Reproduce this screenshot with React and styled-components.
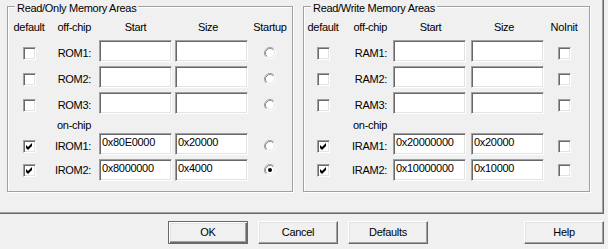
import React from "react";
import styled, { createGlobalStyle, css } from "styled-components";

const Global = createGlobalStyle`
  html, body { margin: 0; padding: 0; background: #f0f0f0; }
  body { font-family: "Liberation Sans", Arial, sans-serif; font-size: 11px; color: #000; }
  #root { width: 608px; height: 249px; overflow: hidden; }
`;

const Page = styled.div`
  width: 608px;
  height: 249px;
  display: flex;
  flex-direction: column;
  background: #f0f0f0;
  font-family: "Liberation Sans", Arial, sans-serif;
  font-size: 11px;
  line-height: 13px;
  letter-spacing: -0.3px;
  color: #000;
`;

const TabPage = styled.div`
  box-sizing: border-box;
  width: 604px;
  height: 214px;
  border-right: 1px solid #696969;
  border-bottom: 1px solid #696969;
  box-shadow: inset -1px -1px 0 #a0a0a0;
  padding: 6px 0 0 7px;
  display: flex;
  gap: 10px;
  align-items: flex-start;
`;

const Group = styled.section`
  position: relative;
  box-sizing: border-box;
  width: ${(p) => p.$w}px;
  height: 186px;
  border: 1px solid #a0a0a0;
  box-shadow: inset 1px 1px 0 #fff, 1px 1px 0 #fff;
  padding-top: 7px;
`;

const Legend = styled.span`
  position: absolute;
  top: -5px;
  left: 7px;
  padding: 0 2px;
  background: #f0f0f0;
  white-space: nowrap;
`;

const Grid = styled.div`
  display: grid;
  grid-template-columns: ${(p) => p.$cols};
  grid-template-rows: 26px 26px 26px 26px 15px 26px 22px;
  column-gap: 3px;
`;

const Head = styled.div`
  align-self: center;
  text-align: ${(p) => p.$align || "center"};
  padding-right: ${(p) => p.$pr || 0}px;
  white-space: nowrap;
`;

const RowLabel = styled.div`
  align-self: ${(p) => (p.$top ? "start" : "center")};
  text-align: right;
  padding-right: ${(p) => p.$pr}px;
  white-space: nowrap;
  ${(p) => p.$top && css`padding-top: 1px;`}
`;

const Cell = styled.div`
  align-self: ${(p) => (p.$top ? "start" : "center")};
  display: flex;
  justify-content: center;
  ${(p) => p.$top && css`padding-top: 5px;`}
`;

const Field = styled.div`
  box-sizing: border-box;
  justify-self: start;
  align-self: start;
  width: ${(p) => p.$w || 73}px;
  height: 22px;
  background: #fff;
  border: 1px solid;
  border-color: #a0a0a0 #fff #fff #a0a0a0;
  box-shadow: inset 1px 1px 0 #696969, inset -1px -1px 0 #e3e3e3;
  padding: 2px 0 0 2px;
  white-space: nowrap;
  overflow: hidden;
`;

const Box = styled.span`
  box-sizing: border-box;
  width: 13px;
  height: 13px;
  display: inline-flex;
  align-items: center;
  justify-content: center;
  background: #fff;
  border: 1px solid;
  border-color: #a0a0a0 #fff #fff #a0a0a0;
  box-shadow: inset 1px 1px 0 #696969, inset -1px -1px 0 #e3e3e3;
`;

const ButtonRow = styled.div`
  display: flex;
  gap: 10px;
  margin-top: 7px;
  padding: 0 4px 0 168px;
`;

const Button = styled.button`
  box-sizing: border-box;
  width: 80px;
  height: 23px;
  padding: 0;
  font: inherit;
  letter-spacing: inherit;
  color: #000;
  background: #f0f0f0;
  border: 1px solid;
  border-color: #fff #696969 #696969 #fff;
  box-shadow: inset -1px -1px 0 #a0a0a0, inset 1px 1px 0 #e3e3e3;
  ${(p) =>
    p.$default &&
    css`
      border-color: #696969;
      box-shadow: inset 1px 1px 0 #fff, inset -1px -1px 0 #696969,
        inset -2px -2px 0 #a0a0a0, inset 2px 2px 0 #e3e3e3;
    `}
  ${(p) => p.$push && css`margin-left: auto;`}
`;

function Check({ checked }) {
  return (
    <Box role="checkbox" aria-checked={checked}>
      {checked && (
        <svg width="7" height="7" viewBox="0 0 7 7">
          <polygon points="0,2 2,4 6,0 6,3 2,7 0,5" fill="#000" />
        </svg>
      )}
    </Box>
  );
}

function Radio({ checked }) {
  return (
    <svg width="12" height="12" viewBox="0 0 12 12" role="radio" aria-checked={checked}>
      <circle cx="6" cy="6" r="5" fill="#fff" />
      <path d="M2.11 9.89 A5.5 5.5 0 0 1 9.89 2.11" fill="none" stroke="#a0a0a0" />
      <path d="M9.89 2.11 A5.5 5.5 0 0 1 2.11 9.89" fill="none" stroke="#fff" />
      <path d="M2.82 9.18 A4.5 4.5 0 0 1 9.18 2.82" fill="none" stroke="#909090" />
      <path d="M9.18 2.82 A4.5 4.5 0 0 1 2.82 9.18" fill="none" stroke="#e3e3e3" />
      {checked && <circle cx="6" cy="6" r="2" fill="#000" />}
    </svg>
  );
}

function MemoryGroup({ title, width, cols, labelPad, lastHead, lastKind, offRows, onRows }) {
  const last = (v) => (lastKind === "radio" ? <Radio checked={v} /> : <Check checked={v} />);
  return (
    <Group $w={width}>
      <Legend>{title}</Legend>
      <Grid $cols={cols}>
        <Head>default</Head>
        <Head $align="right" $pr={labelPad}>off-chip</Head>
        <Head>Start</Head>
        <Head $pr={7}>Size</Head>
        <Head>{lastHead}</Head>
        {offRows.map((r) => (
          <React.Fragment key={r.name}>
            <Cell><Check checked={r.def} /></Cell>
            <RowLabel $pr={labelPad}>{r.name}:</RowLabel>
            <Field $w={73}>{r.start}</Field>
            <Field>{r.size}</Field>
            <Cell>{last(r.last)}</Cell>
          </React.Fragment>
        ))}
        <div />
        <RowLabel $pr={labelPad}>on-chip</RowLabel>
        <div />
        <div />
        <div />
        {onRows.map((r) => (
          <React.Fragment key={r.name}>
            <Cell><Check checked={r.def} /></Cell>
            <RowLabel $pr={labelPad}>{r.name}:</RowLabel>
            <Field $w={73}>{r.start}</Field>
            <Field>{r.size}</Field>
            <Cell>{last(r.last)}</Cell>
          </React.Fragment>
        ))}
      </Grid>
    </Group>
  );
}

export default function App() {
  return (
    <Page>
      <Global />
      <TabPage>
        <MemoryGroup
          title="Read/Only Memory Areas"
          width={286}
          cols="42px 43px 73px 73px 38px"
          labelPad={5}
          lastHead="Startup"
          lastKind="radio"
          offRows={[
            { name: "ROM1", def: false, start: "", size: "", last: false },
            { name: "ROM2", def: false, start: "", size: "", last: false },
            { name: "ROM3", def: false, start: "", size: "", last: false },
          ]}
          onRows={[
            { name: "IROM1", def: true, start: "0x80E0000", size: "0x20000", last: false },
            { name: "IROM2", def: true, start: "0x8000000", size: "0x4000", last: true },
          ]}
        />
        <MemoryGroup
          title="Read/Write Memory Areas"
          width={287}
          cols="38px 45px 75px 73px 34px"
          labelPad={3}
          lastHead="NoInit"
          lastKind="check"
          offRows={[
            { name: "RAM1", def: false, start: "", size: "", last: false },
            { name: "RAM2", def: false, start: "", size: "", last: false },
            { name: "RAM3", def: false, start: "", size: "", last: false },
          ]}
          onRows={[
            { name: "IRAM1", def: true, start: "0x20000000", size: "0x20000", last: false },
            { name: "IRAM2", def: true, start: "0x10000000", size: "0x10000", last: false },
          ]}
        />
      </TabPage>
      <ButtonRow>
        <Button $default>OK</Button>
        <Button>Cancel</Button>
        <Button>Defaults</Button>
        <Button $push>Help</Button>
      </ButtonRow>
    </Page>
  );
}
